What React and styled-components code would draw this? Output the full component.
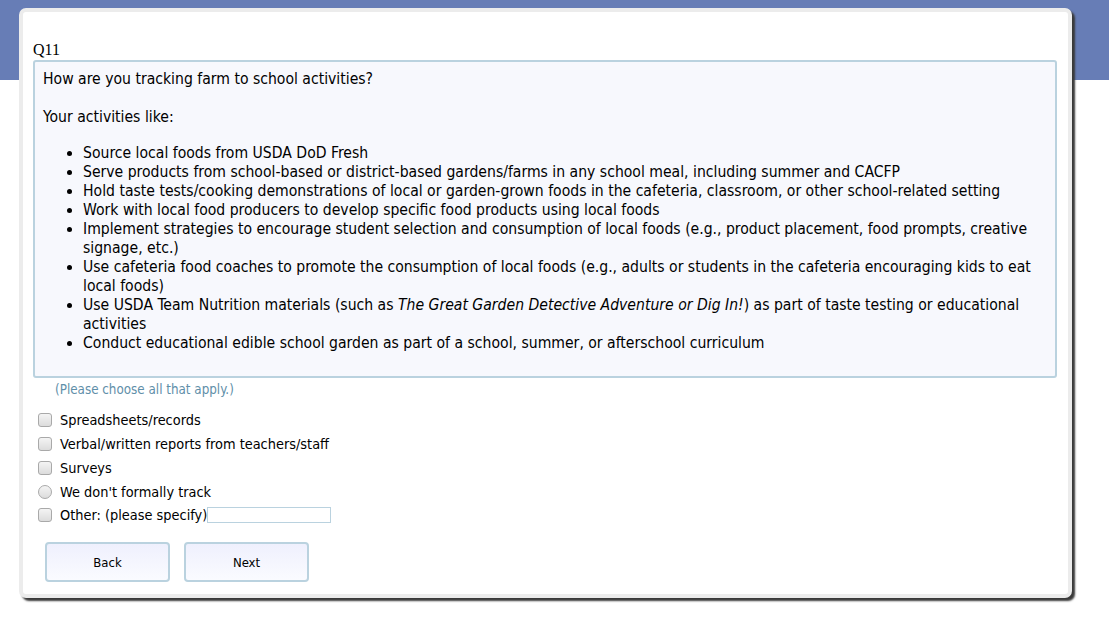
import React from "react";
import styled, { createGlobalStyle } from "styled-components";

const GlobalStyle = createGlobalStyle`
  html, body {
    margin: 0;
    padding: 0;
    background: #ffffff;
  }
  body {
    font-family: "DejaVu Sans Condensed", "DejaVu Sans", sans-serif;
    color: #000;
  }
`;

const Page = styled.div`
  position: relative;
  width: 1109px;
  height: 634px;
  background: linear-gradient(#677db6 0, #677db6 80px, #ffffff 80px);
  padding: 8px 0 0 19px;
  box-sizing: border-box;
`;

const Card = styled.div`
  width: 1053px;
  height: 590px;
  box-sizing: border-box;
  background: #fff;
  border: 4px solid #ececec;
  border-radius: 7px;
  box-shadow: 3px 3px 2px #3a3a3a;
  padding: 28px 11px 0 10px;
`;

const QLabel = styled.div`
  font-family: "Liberation Serif", serif;
  font-size: 16px;
  line-height: 20px;
`;

const QuestionBox = styled.div`
  background: #f7f8fd;
  border: 2px solid #bad2df;
  border-radius: 3px;
  padding: 8px 10px 7px 8px;
  font-size: 15.6px;
  line-height: 19px;
`;

const Para = styled.p`
  margin: 0 0 ${(p) => p.gap}px 0;
`;

const Bullets = styled.ul`
  margin: 0 0 16px 0;
  padding-left: 40px;
  li {
    line-height: 19px;
  }
`;

const Hint = styled.div`
  font-size: 13.3px;
  color: #5f8fa9;
  margin: 4px 0 0 22px;
  line-height: 16px;
`;

const Options = styled.div`
  display: flex;
  flex-direction: column;
  margin-top: 10px;
  padding-left: 5px;
`;

const Option = styled.label`
  display: flex;
  align-items: center;
  height: ${(p) => p.h || 24}px;
  font-size: 14.4px;
  gap: 8px;
`;

const Check = styled.span`
  width: 14px;
  height: 14px;
  box-sizing: border-box;
  border: 1px solid #a9a9a9;
  border-radius: ${(p) => (p.round ? "50%" : "3px")};
  background: linear-gradient(#f4f4f4, #dcdcdc);
  flex: none;
`;

const SpecifyInput = styled.input`
  width: 124px;
  height: 16px;
  box-sizing: border-box;
  border: 1px solid #bad2df;
  margin: 0 0 0 -8px;
  padding: 0;
  background: #fff;
`;

const ButtonRow = styled.div`
  display: flex;
  gap: 14px;
  margin: 16px 0 0 12px;
`;

const NavButton = styled.button`
  width: 125px;
  height: 40px;
  border: 2px solid #bad2df;
  border-radius: 4px;
  background: linear-gradient(#eff0fd, #fafbff);
  font-family: "DejaVu Sans Condensed", "DejaVu Sans", sans-serif;
  font-size: 13px;
  color: #000;
  cursor: pointer;
`;

const activities = [
  "Source local foods from USDA DoD Fresh",
  "Serve products from school-based or district-based gardens/farms in any school meal, including summer and CACFP",
  "Hold taste tests/cooking demonstrations of local or garden-grown foods in the cafeteria, classroom, or other school-related setting",
  "Work with local food producers to develop specific food products using local foods",
  "Implement strategies to encourage student selection and consumption of local foods (e.g., product placement, food prompts, creative signage, etc.)",
  "Use cafeteria food coaches to promote the consumption of local foods (e.g., adults or students in the cafeteria encouraging kids to eat local foods)",
];

const choices = [
  { text: "Spreadsheets/records" },
  { text: "Verbal/written reports from teachers/staff" },
  { text: "Surveys" },
  { text: "We don't formally track", round: true },
];

export default function App() {
  return (
    <>
      <GlobalStyle />
      <Page>
        <Card>
          <QLabel>Q11</QLabel>
          <QuestionBox>
            <Para gap={19}>How are you tracking farm to school activities?</Para>
            <Para gap={17}>Your activities like:</Para>
            <Bullets>
              {activities.map((a) => (
                <li key={a}>{a}</li>
              ))}
              <li>
                Use USDA Team Nutrition materials (such as{" "}
                <em>The Great Garden Detective Adventure or Dig In!</em>) as part
                of taste testing or educational activities
              </li>
              <li>
                Conduct educational edible school garden as part of a school,
                summer, or afterschool curriculum
              </li>
            </Bullets>
          </QuestionBox>
          <Hint>(Please choose all that apply.)</Hint>
          <Options>
            {choices.map((c) => (
              <Option key={c.text}>
                <Check round={c.round} />
                {c.text}
              </Option>
            ))}
            <Option h={22}>
              <Check />
              Other: (please specify)
              <SpecifyInput type="text" />
            </Option>
          </Options>
          <ButtonRow>
            <NavButton>Back</NavButton>
            <NavButton>Next</NavButton>
          </ButtonRow>
        </Card>
      </Page>
    </>
  );
}
